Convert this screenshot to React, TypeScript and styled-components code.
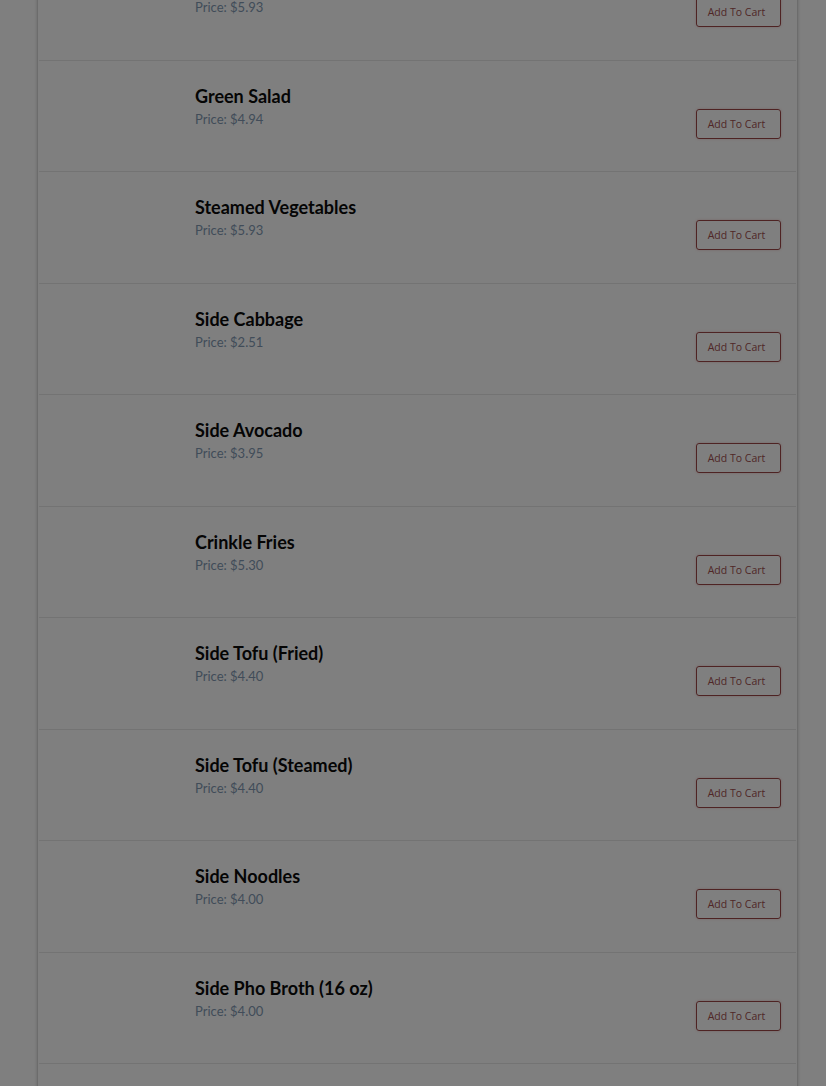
import React from 'react';
import styled, { createGlobalStyle } from 'styled-components';

interface MenuItem {
    id: number;
    name: string;
    price: number;
}

const items: MenuItem[] = [
    { id: 1, name: 'Side Rice', price: 5.93 },
    { id: 2, name: 'Green Salad', price: 4.94 },
    { id: 3, name: 'Steamed Vegetables', price: 5.93 },
    { id: 4, name: 'Side Cabbage', price: 2.51 },
    { id: 5, name: 'Side Avocado', price: 3.95 },
    { id: 6, name: 'Crinkle Fries', price: 5.3 },
    { id: 7, name: 'Side Tofu (Fried)', price: 4.4 },
    { id: 8, name: 'Side Tofu (Steamed)', price: 4.4 },
    { id: 9, name: 'Side Noodles', price: 4.0 },
    { id: 10, name: 'Side Pho Broth (16 oz)', price: 4.0 },
    { id: 11, name: 'Side Egg Rolls', price: 3.5 },
];

const App: React.FC = () => {
    return (
        <>
            <GlobalStyle />
            <Page>
                <MenuCard>
                    {items.map(item => (
                        <ItemRow key={item.id}>
                            <Thumb />
                            <Info>
                                <ItemName>{item.name}</ItemName>
                                <ItemPrice>Price: ${item.price.toFixed(2)}</ItemPrice>
                            </Info>
                            <CartButton type="button">Add To Cart</CartButton>
                        </ItemRow>
                    ))}
                </MenuCard>
            </Page>
            <Overlay />
        </>
    );
};

const GlobalStyle = createGlobalStyle`
    html, body {
        margin: 0;
        padding: 0;
        background: #ffffff;
        overflow: hidden;
        height: 1086px;
    }
    body {
        font-family: 'Lato', 'Liberation Sans', sans-serif;
    }
`;

const Page = styled.div`
    padding-left: 37px;
    margin-top: -52px;
`;

const MenuCard = styled.div`
    width: 757px;
    background: #ffffff;
    border: 1px solid #d8d8d8;
    box-shadow: 0 0 3px rgba(0, 0, 0, 0.2);
    padding: 0 1px;
`;

const ItemRow = styled.div`
    box-sizing: border-box;
    height: 111.5px;
    display: flex;
    align-items: flex-start;
    padding: 0 15px;
    border-bottom: 1px solid #e6e6e6;
`;

const Thumb = styled.div`
    width: 126px;
    height: 100px;
    margin-top: 5px;
    margin-right: 15px;
    flex-shrink: 0;
`;

const Info = styled.div`
    flex: 1;
    padding-top: 24px;
`;

const ItemName = styled.div`
    font-family: 'Lato', 'Noto Sans', sans-serif;
    font-weight: 700;
    font-size: 18px;
    line-height: 22px;
    color: #0a0a0a;
`;

const ItemPrice = styled.div`
    margin-top: 3px;
    font-family: 'Lato', 'Noto Sans', sans-serif;
    font-size: 13px;
    line-height: 18px;
    color: #8299b2;
`;

const CartButton = styled.button`
    margin-top: 48px;
    width: 85px;
    height: 30px;
    padding: 0 4px 0 0;
    background: transparent;
    border: 1px solid #9c4646;
    border-radius: 3px;
    box-shadow: 0 0 3px rgba(210, 110, 110, 0.35);
    font-family: 'Open Sans', 'Liberation Sans', sans-serif;
    font-size: 10.5px;
    color: #a04e4e;
    cursor: pointer;
`;

const Overlay = styled.div`
    position: fixed;
    inset: 0;
    background: rgba(0, 0, 0, 0.5);
`;

export default App;
